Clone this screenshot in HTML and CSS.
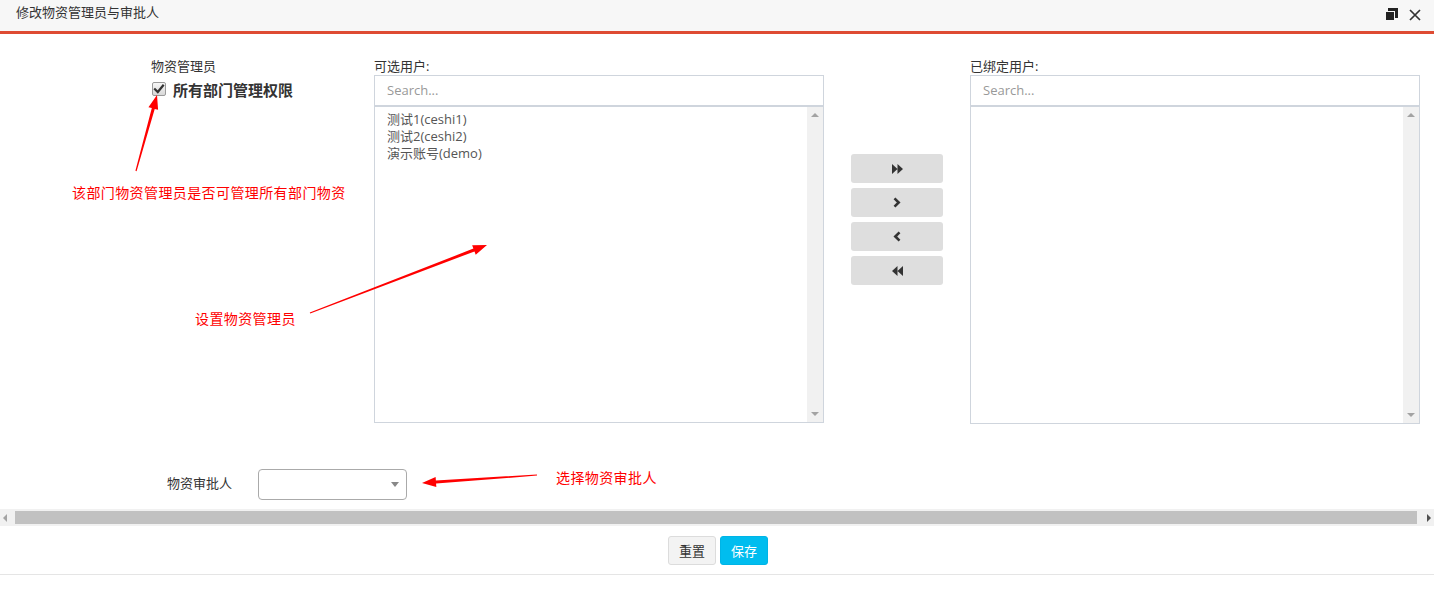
FILE: index.html
```
<!DOCTYPE html>
<html lang="zh-CN">
<head>
<meta charset="utf-8">
<title>修改物资管理员与审批人</title>
<link rel="stylesheet" href="styles.css">
</head>
<body>
<div class="dialog">
  <div class="header">
    <span class="title">修改物资管理员与审批人</span>
    <div class="tools">
      <svg class="ico-restore" width="13" height="13" viewBox="0 0 13 13"><rect x="3" y="0" width="10" height="10" fill="#222"/><rect x="0.5" y="3.5" width="9" height="9" fill="#222" stroke="#f7f7f7" stroke-width="1"/></svg>
      <svg class="ico-close" width="12" height="12" viewBox="0 0 12 12"><path d="M1 1 L11 11 M11 1 L1 11" stroke="#333" stroke-width="1.7" fill="none"/></svg>
    </div>
  </div>

  <div class="content">
    <div class="row-top">
      <div class="mgr">
        <div class="lbl">物资管理员</div>
        <label class="chk-row">
          <span class="chk"><svg width="12" height="12" viewBox="0 0 12 12"><path d="M2 6.2 L4.8 9 L10 2.6" stroke="#333" stroke-width="2.2" fill="none" stroke-linecap="square"/></svg></span>
          <span class="chk-text">所有部门管理权限</span>
        </label>
      </div>

      <div class="dual">
        <div class="pane">
          <div class="lbl">可选用户:</div>
          <div class="search">Search...</div>
          <div class="list">
            <div class="items">
              <div class="item">测试1(ceshi1)</div>
              <div class="item">测试2(ceshi2)</div>
              <div class="item">演示账号(demo)</div>
            </div>
            <div class="vscroll"><span class="tri-up"></span><span class="tri-down"></span></div>
          </div>
        </div>

        <div class="moves">
          <div class="mbtn"><svg width="11" height="10" viewBox="0 0 11 10"><path d="M0 0 L5.5 5 L0 10 Z M5.5 0 L11 5 L5.5 10 Z" fill="#333"/></svg></div>
          <div class="mbtn"><svg width="8" height="11" viewBox="0 0 8 11"><path d="M1.5 1.3 L5.7 5.5 L1.5 9.7" stroke="#333" stroke-width="2.6" fill="none"/></svg></div>
          <div class="mbtn"><svg width="8" height="11" viewBox="0 0 8 11"><path d="M6.5 1.3 L2.3 5.5 L6.5 9.7" stroke="#333" stroke-width="2.6" fill="none"/></svg></div>
          <div class="mbtn"><svg width="11" height="10" viewBox="0 0 11 10"><path d="M11 0 L5.5 5 L11 10 Z M5.5 0 L0 5 L5.5 10 Z" fill="#333"/></svg></div>
        </div>

        <div class="pane">
          <div class="lbl">已绑定用户:</div>
          <div class="search">Search...</div>
          <div class="list tall">
            <div class="items"></div>
            <div class="vscroll"><span class="tri-up"></span><span class="tri-down"></span></div>
          </div>
        </div>
      </div>
    </div>

    <div class="row-approver">
      <div class="ap-lbl">物资审批人</div>
      <div class="select"><span class="caret"></span></div>
    </div>

    <svg class="annot" width="1434" height="475" viewBox="0 34 1434 475">
      <polygon fill="#ff0000" points="135.42,170.84 151.82,108.09 148.45,107.16 157,95 158.09,109.82 154.72,108.89 136.58,171.16"/>
      <polygon fill="#ff0000" points="309.78,312.44 473.39,248.62 472.14,245.35 487,245 475.72,254.69 474.47,251.42 310.22,313.56"/>
      <polygon fill="#ff0000" points="536.96,474.40 435.87,480.53 435.62,477.04 422,483 436.32,487.02 436.07,483.53 537.04,475.60"/>
    </svg>
    <div class="note note1">该部门物资管理员是否可管理所有部门物资</div>
    <div class="note note2">设置物资管理员</div>
    <div class="note note3">选择物资审批人</div>
  </div>

  <div class="hscroll">
    <span class="tri-left"></span>
    <div class="thumb"></div>
    <span class="tri-right"></span>
  </div>

  <div class="footer">
    <div class="btn btn-reset">重置</div>
    <div class="btn btn-save">保存</div>
  </div>
</div>
</body>
</html>
```
FILE: styles.css
```
* { box-sizing: border-box; }
html, body { margin: 0; padding: 0; background: #fff; }
body {
  font-family: "Open Sans", "Noto Sans CJK SC", sans-serif;
  font-size: 13px;
  color: #333;
  width: 1434px;
  height: 590px;
  overflow: hidden;
}
.dialog { width: 1434px; }

.header {
  height: 34px;
  background: #f7f7f7;
  border-bottom: 3px solid #de4b33;
  display: flex;
  align-items: flex-start;
  justify-content: space-between;
}
.title {
  padding-left: 16px;
  line-height: 24px;
  font-size: 13px;
  color: #333;
}
.tools {
  display: flex;
  align-items: center;
  gap: 11px;
  padding-top: 8px;
  padding-right: 13px;
}
.tools svg { display: block; }

.content {
  position: relative;
  height: 475px;
}
.row-top {
  display: flex;
  padding-top: 24px;
}
.lbl {
  line-height: 17px;
  height: 17px;
  color: #333;
  font-size: 13px;
}
.mgr {
  margin-left: 151px;
  width: 223px;
}
.chk-row {
  display: flex;
  align-items: center;
  gap: 7px;
  margin-top: 6px;
  margin-left: 1px;
  height: 15px;
}
.chk {
  width: 14px;
  height: 14px;
  border: 1px solid #9a9a9a;
  border-radius: 2px;
  background: linear-gradient(#f6f6f6, #d8d8d8);
  display: flex;
  align-items: center;
  justify-content: center;
}
.chk svg { display: block; }
.chk-text {
  font-weight: bold;
  font-size: 15px;
  color: #333;
  line-height: 15px;
  margin-top: 4px;
}

.dual { display: flex; }
.pane { width: 450px; }
.search {
  height: 31px;
  border: 1px solid #cfd5dd;
  padding-left: 12px;
  line-height: 29px;
  color: #999;
  font-size: 13px;
}
.list {
  height: 317px;
  border: 1px solid #cfd5dd;
  display: flex;
}
.list.tall { height: 318px; }
.items {
  flex: 1;
  padding: 4px 12px;
}
.item {
  line-height: 17px;
  color: #555;
  font-size: 13px;
}
.vscroll {
  width: 16px;
  background: #f1f1f1;
  display: flex;
  flex-direction: column;
  justify-content: space-between;
  align-items: center;
  padding: 6px 0;
}
.tri-up {
  width: 0; height: 0;
  border-left: 4px solid transparent;
  border-right: 4px solid transparent;
  border-bottom: 4px solid #a3a3a3;
}
.tri-down {
  width: 0; height: 0;
  border-left: 4px solid transparent;
  border-right: 4px solid transparent;
  border-top: 4px solid #a3a3a3;
}

.moves {
  width: 146px;
  padding-left: 27px;
  padding-top: 96px;
  display: flex;
  flex-direction: column;
  gap: 5px;
}
.mbtn {
  width: 92px;
  height: 29px;
  background: #dedede;
  border-radius: 3px;
  display: flex;
  align-items: center;
  justify-content: center;
}
.mbtn svg { display: block; }

.row-approver {
  display: flex;
  align-items: center;
  margin-top: 45px;
}
.ap-lbl {
  margin-left: 167px;
  width: 91px;
  color: #333;
  font-size: 13px;
  line-height: 17px;
  margin-top: -3px;
}
.select {
  width: 149px;
  height: 31px;
  border: 1px solid #aaa;
  border-radius: 4px;
  display: flex;
  align-items: center;
  justify-content: flex-end;
  padding-right: 7px;
}
.caret {
  width: 0; height: 0;
  border-left: 4px solid transparent;
  border-right: 4px solid transparent;
  border-top: 5px solid #888;
}

.annot {
  position: absolute;
  left: 0;
  top: 0;
  pointer-events: none;
}
.note {
  position: absolute;
  color: #ff0000;
  font-size: 14px;
  line-height: 18px;
  letter-spacing: 0.4px;
  white-space: nowrap;
}
.note1 { left: 72px; top: 150px; }
.note2 { left: 195px; top: 276px; }
.note3 { left: 556px; top: 435px; }

.hscroll {
  height: 17px;
  background: #f1f1f1;
  display: flex;
  align-items: center;
  padding: 0 3px;
}
.thumb {
  height: 13px;
  background: #c1c1c1;
  margin-left: 8px;
  margin-right: 10px;
  flex: 1;
}
.tri-left {
  width: 0; height: 0;
  border-top: 4px solid transparent;
  border-bottom: 4px solid transparent;
  border-right: 4px solid #a3a3a3;
}
.tri-right {
  width: 0; height: 0;
  border-top: 4px solid transparent;
  border-bottom: 4px solid transparent;
  border-left: 4px solid #505050;
}

.footer {
  display: flex;
  justify-content: center;
  gap: 4px;
  padding: 10px 0 9px 2px;
  border-bottom: 1px solid #e5e5e5;
}
.btn {
  width: 48px;
  height: 29px;
  border-radius: 3px;
  font-size: 13px;
  display: flex;
  align-items: center;
  justify-content: center;
}
.btn-reset {
  background: #f3f3f3;
  border: 1px solid #dcdcdc;
  color: #333;
}
.btn-save {
  background: #00bdef;
  border: 1px solid #00b4e6;
  color: #fff;
}
```
